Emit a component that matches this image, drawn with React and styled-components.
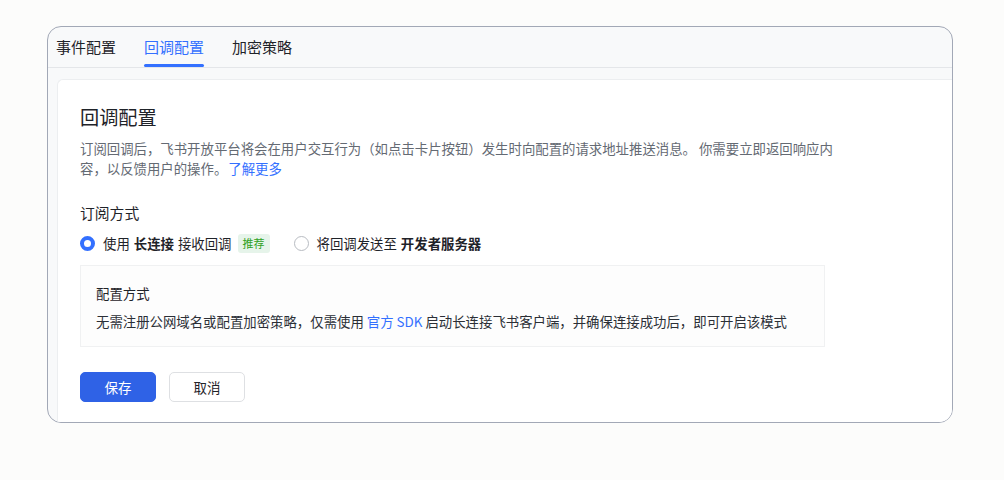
import React from "react";
import styled, { createGlobalStyle } from "styled-components";

const Global = createGlobalStyle`
  html, body { margin: 0; padding: 0; background: #fcfcfb; }
  body { font-family: "Noto Sans CJK SC", "Noto Sans", sans-serif; -webkit-font-smoothing: antialiased; }
  * { box-sizing: border-box; }
`;

const Page = styled.div`
  width: 1004px;
  height: 480px;
  padding: 26px 0 0 47px;
`;

const Card = styled.div`
  width: 906px;
  height: 397px;
  border: 1.5px solid #a2a8b6;
  border-radius: 14px;
  background: #f8f9fa;
  overflow: hidden;
  display: flex;
  flex-direction: column;
`;

const TabBar = styled.div`
  height: 41px;
  flex: none;
  display: flex;
  gap: 28px;
  padding: 0 8px;
  border-bottom: 1px solid #e4e6e9;
`;

const Tab = styled.div`
  position: relative;
  display: flex;
  align-items: center;
  font-size: 15px;
  color: ${(p) => (p.$active ? "#3370ff" : "#1f2329")};
  padding-bottom: 2px;
  &::after {
    content: "";
    display: ${(p) => (p.$active ? "block" : "none")};
    position: absolute;
    left: 0;
    right: 0;
    bottom: 0;
    height: 3px;
    border-radius: 2px;
    background: #3370ff;
  }
`;

const Body = styled.div`
  flex: 1;
  padding: 11px 0 0 9px;
  display: flex;
`;

const Panel = styled.div`
  flex: 1;
  background: #ffffff;
  border-top: 1px solid #eceef0;
  border-left: 1px solid #eceef0;
  border-top-left-radius: 6px;
  padding: 24px 0 0 22px;
  display: flex;
  flex-direction: column;
`;

const Title = styled.div`
  font-size: 19.2px;
  line-height: 26px;
  color: #1f2329;
`;

const Desc = styled.p`
  margin: 8px 0 0;
  max-width: 760px;
  font-size: 13.4px;
  line-height: 20px;
  color: #646a73;
`;

const Link = styled.a`
  color: #3370ff;
  text-decoration: none;
`;

const MoreLink = styled(Link)`
  display: inline-block;
  margin-left: 1px;
`;

const SectionLabel = styled.div`
  margin-top: 24px;
  font-size: 14.8px;
  line-height: 22px;
  color: #1f2329;
`;

const RadioRow = styled.div`
  margin-top: 8px;
  height: 22px;
  display: flex;
  align-items: center;
  gap: 24px;
`;

const RadioOption = styled.label`
  display: flex;
  align-items: center;
  gap: 8px;
  font-size: 13.4px;
  color: #1f2329;
`;

const RadioDot = styled.span`
  width: 15px;
  height: 15px;
  border-radius: 50%;
  flex: none;
  background: #fff;
  border: ${(p) => (p.$checked ? "4.5px solid #3370ff" : "1px solid #b8bcc2")};
`;

const Strong = styled.b`
  font-weight: 700;
  margin: 0 4px;
`;

const Tag = styled.span`
  margin-left: -2px;
  height: 19px;
  padding: 0 5px;
  display: inline-flex;
  align-items: center;
  border-radius: 3px;
  background: #e6f4ea;
  color: #2ea121;
  font-size: 11px;
`;

const InfoBox = styled.div`
  margin-top: 11px;
  width: 745px;
  border: 1px solid #f0f1f2;
  background: #fdfdfd;
  padding: 17px 0 15px 15px;
`;

const InfoTitle = styled.div`
  font-size: 13.4px;
  line-height: 20px;
  color: #1f2329;
`;

const InfoText = styled.div`
  margin-top: 8px;
  font-size: 13.4px;
  line-height: 20px;
  color: #2b2f36;
`;

const Actions = styled.div`
  margin-top: 25px;
  display: flex;
  gap: 13px;
`;

const Button = styled.button`
  width: 76px;
  height: 30px;
  border-radius: 5px;
  font-family: inherit;
  font-size: 13.5px;
  cursor: pointer;
  border: 1px solid ${(p) => (p.$primary ? "#2f62e6" : "#dee0e3")};
  background: ${(p) => (p.$primary ? "#2f62e6" : "#ffffff")};
  color: ${(p) => (p.$primary ? "#ffffff" : "#1f2329")};
`;

export default function App() {
  return (
    <>
      <Global />
      <Page>
        <Card>
          <TabBar>
            <Tab>事件配置</Tab>
            <Tab $active>回调配置</Tab>
            <Tab>加密策略</Tab>
          </TabBar>
          <Body>
            <Panel>
              <Title>回调配置</Title>
              <Desc>
                订阅回调后，飞书开放平台将会在用户交互行为（如点击卡片按钮）发生时向配置的请求地址推送消息。 你需要立即返回响应内容，以反馈用户的操作。
                <MoreLink href="#">了解更多</MoreLink>
              </Desc>
              <SectionLabel>订阅方式</SectionLabel>
              <RadioRow>
                <RadioOption>
                  <RadioDot $checked />
                  <span>
                    使用<Strong>长连接</Strong>接收回调
                  </span>
                  <Tag>推荐</Tag>
                </RadioOption>
                <RadioOption>
                  <RadioDot />
                  <span>
                    将回调发送至<Strong>开发者服务器</Strong>
                  </span>
                </RadioOption>
              </RadioRow>
              <InfoBox>
                <InfoTitle>配置方式</InfoTitle>
                <InfoText>
                  无需注册公网域名或配置加密策略，仅需使用 <Link href="#">官方 SDK</Link> 启动长连接飞书客户端，并确保连接成功后，即可开启该模式
                </InfoText>
              </InfoBox>
              <Actions>
                <Button $primary>保存</Button>
                <Button>取消</Button>
              </Actions>
            </Panel>
          </Body>
        </Card>
      </Page>
    </>
  );
}
